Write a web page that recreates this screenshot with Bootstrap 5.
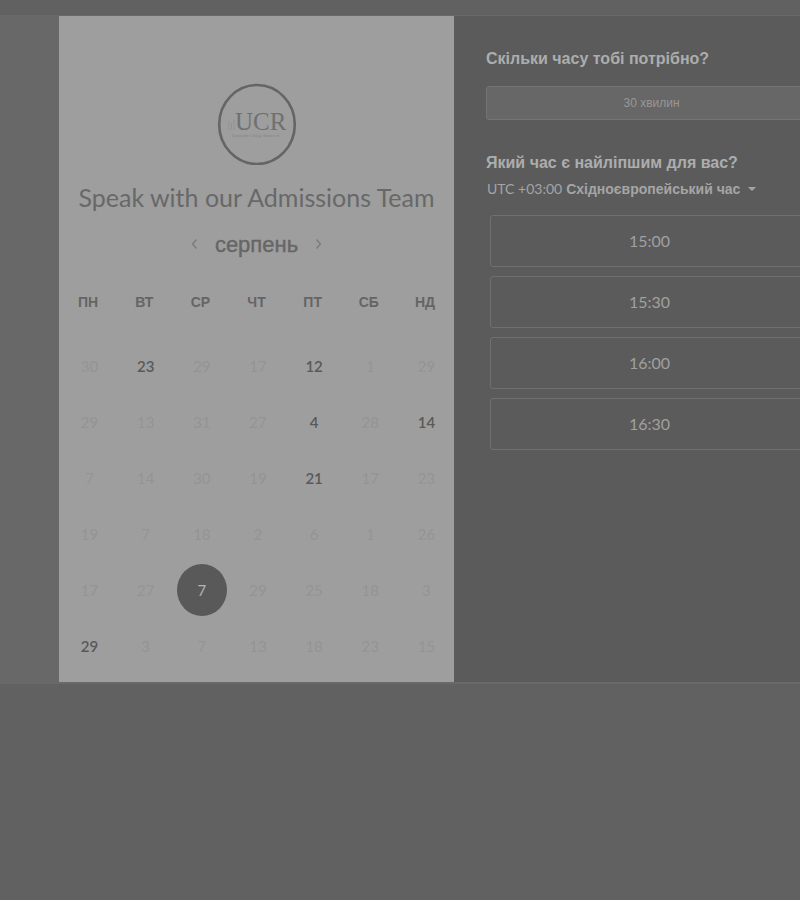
<!DOCTYPE html>
<html lang="uk">
<head>
<meta charset="utf-8">
<meta name="viewport" content="width=device-width, initial-scale=1">
<title>Speak with our Admissions Team</title>
<link href="https://cdn.jsdelivr.net/npm/bootstrap@5.3.0/dist/css/bootstrap.min.css" rel="stylesheet">
<style>
body { background: #616161; font-family: "Liberation Sans", Arial, sans-serif; }
.latin { font-family: Lato, "Liberation Sans", sans-serif; }
.scheduler { background: #686868; border-top: 1px solid #696969; border-bottom: 2px solid #696969; margin-top: 15px; padding-left: 59px; }
.half { flex: 0 0 395px; min-width: 0; }
.calendar-side { background: #9e9e9e; color: #636363; padding: 67px 1px 8px; }
.times-side { background: #5b5b5b; color: #adadad; padding: 32px; flex-grow: 1; }
.logo { width: 80px; height: 82px; }
.team { font-size: 25px; line-height: 32px; margin: 16px 0 0; color: #686868; }
.month-row { gap: 14px; margin-top: 17px; }
.month-name { font-size: 22px; line-height: 30px; color: #666; -webkit-text-stroke: 0.4px #666; }
.step { width: 12px; height: 16px; color: #7a7a7a; }
.days { table-layout: fixed; margin-top: 19px; }
.days th { height: 59px; font-size: 14px; line-height: 20px; color: #656565; padding: 0 0 13px; }
.days td { height: 56px; padding: 0; }
.day { width: 50px; height: 52px; font-size: 15px; line-height: 20px; color: #595959; font-weight: 600; margin-left: 3px; }
.day:disabled { color: #949494; font-weight: 400; }
.day.chosen { background: #595959; color: #b5b5b5; font-weight: 400; }
.question { font-size: 16px; line-height: 22px; }
.duration { height: 34px; margin-top: 16px; border: 1px solid #747474; border-radius: 3px; background: #676767; color: #979797; font-size: 12px; }
.second { margin-top: 32px; }
.zone { font-size: 14px; line-height: 20px; color: #a5a5a5; margin-top: 5px; padding-left: 1px; }
.zone-code { font-size: 14px; }
.slots { gap: 9px; margin-top: 16px; padding: 0 8px 0 4px; }
.slot { height: 52px; border: 1px solid #707070; border-radius: 3px; color: #a0a0a0; font-size: 16px; }
</style>
<script src="https://cdn.jsdelivr.net/npm/bootstrap@5.3.0/dist/js/bootstrap.bundle.min.js"></script>
</head>
<body class="overflow-x-hidden">
<main class="scheduler d-flex overflow-hidden">
  <section class="half calendar-side d-flex flex-column align-items-center">
    <svg class="logo" viewBox="0 0 80 82" role="img" aria-label="UCR">
      <ellipse cx="40" cy="41.500" rx="37.800" ry="39.500" fill="none" stroke="#656565" stroke-width="2.600"/>
      <path d="M12 38v9M14.500 40v7M17 37v10" stroke="#929292" stroke-width="1"/>
      <text x="18" y="47" font-family="Liberation Serif, serif" font-size="25" fill="#707070">UCR</text>
      <text x="15" y="54" font-family="Liberation Serif, serif" font-size="4" fill="#838383">University College Roosevelt</text>
    </svg>
    <h1 class="team latin fw-normal text-nowrap">Speak with our Admissions Team</h1>
    <div class="month-row d-flex align-items-center">
      <button type="button" class="step btn p-0 border-0 d-flex" aria-label="Попередній місяць"><svg width="12" height="14" viewBox="0 0 12 14" fill="none" stroke="currentColor" stroke-width="1.300"><path d="M7.500 2.500 3.500 7l4 4.500"/></svg></button>
      <h2 class="month-name fw-normal m-0">серпень</h2>
      <button type="button" class="step btn p-0 border-0 d-flex" aria-label="Наступний місяць"><svg width="12" height="14" viewBox="0 0 12 14" fill="none" stroke="currentColor" stroke-width="1.300"><path d="m4.500 2.500 4 4.500-4 4.500"/></svg></button>
    </div>
    <table class="days w-100 text-center align-middle">
      <thead><tr><th>ПН</th><th>ВТ</th><th>СР</th><th>ЧТ</th><th>ПТ</th><th>СБ</th><th>НД</th></tr></thead>
      <tbody class="latin" id="days"></tbody>
    </table>
  </section>
  <section class="half times-side">
    <h2 class="question fw-bold m-0">Скільки часу тобі потрібно?</h2>
    <button type="button" class="duration btn w-100 p-0">30 хвилин</button>
    <h2 class="question second fw-bold mb-0">Який час є найліпшим для вас?</h2>
    <button type="button" class="zone btn border-0 py-0 pe-0 d-flex align-items-center text-nowrap">
      <span class="zone-code latin">UTC +03:00</span><b class="ms-1">Східноєвропейський час</b>
      <svg class="ms-2" width="8" height="4" viewBox="0 0 8 4" fill="currentColor"><path d="M0 0h8L4 4z"/></svg>
    </button>
    <div class="slots d-grid latin">
      <button type="button" class="slot btn p-0">15:00</button>
      <button type="button" class="slot btn p-0">15:30</button>
      <button type="button" class="slot btn p-0">16:00</button>
      <button type="button" class="slot btn p-0">16:30</button>
    </div>
  </section>
</main>
<script>
const weeks = [
  [30, '23*', 29, 17, '12*', 1, 29],
  [29, 13, 31, 27, '4*', 28, '14*'],
  [7, 14, 30, 19, '21*', 17, 23],
  [19, 7, 18, 2, 6, 1, 26],
  [17, 27, '7!', 29, 25, 18, 3],
  ['29*', 3, 7, 13, 18, 23, 15]
];
// "*" marks an open day, "!" the chosen one
document.getElementById('days').innerHTML = weeks.map(week => '<tr>' + week.map(d => {
  const s = String(d);
  const chosen = s.includes('!');
  const open = chosen || s.includes('*');
  return `<td><button type="button" class="day btn border-0 rounded-circle p-0 opacity-100${chosen ? ' chosen' : ''}"${open ? '' : ' disabled'}>${parseInt(s)}</button></td>`;
}).join('') + '</tr>').join('');
</script>
</body>
</html>
